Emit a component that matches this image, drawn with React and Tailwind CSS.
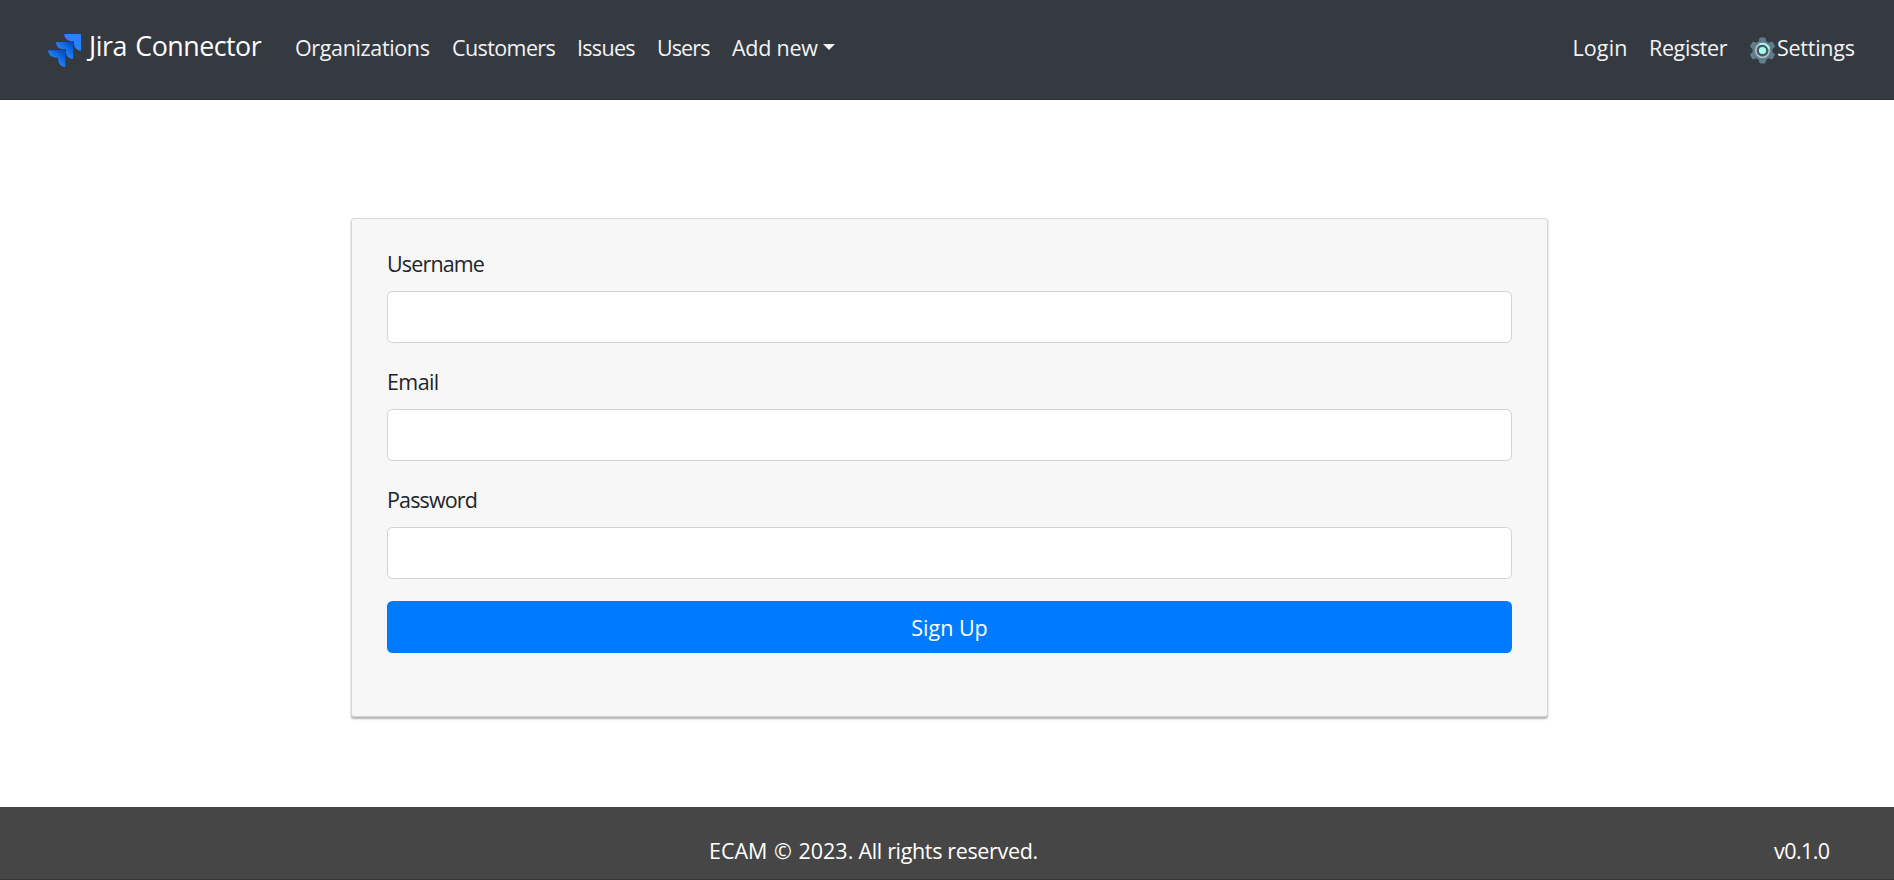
function JiraLogo() {
  return (
    <svg viewBox="0 0 24 24" className="mt-[9px] h-[33px] w-[33px] shrink-0">
      <defs>
        <linearGradient id="jira-mid" x1="0.98" y1="0" x2="0.4" y2="0.6">
          <stop offset="0.18" stopColor="#0052cc" />
          <stop offset="1" stopColor="#2684ff" />
        </linearGradient>
        <linearGradient id="jira-low" x1="1" y1="0.05" x2="0.4" y2="0.65">
          <stop offset="0.18" stopColor="#0052cc" />
          <stop offset="1" stopColor="#2684ff" />
        </linearGradient>
      </defs>
      <path fill="url(#jira-low)" d="M12.1 11.8H0a5.22 5.22 0 0 0 5.23 5.2h2.13v1.8A5.22 5.22 0 0 0 12.58 24V12.3a.5.5 0 0 0-.48-.5z" />
      <path fill="url(#jira-mid)" d="M17.8 5.9H5.74a5.22 5.22 0 0 0 5.21 5.2h2.13v1.95a5.22 5.22 0 0 0 5.22 5.2V6.4a.5.5 0 0 0-.5-.5z" />
      <path fill="#2684ff" d="M23.5 0H11.8a5.22 5.22 0 0 0 5.21 5.22h1.9v2.05A5.22 5.22 0 0 0 24 12.2V.5a.5.5 0 0 0-.5-.5z" />
    </svg>
  );
}

function GearIcon() {
  return (
    <svg viewBox="0 0 26 27" className="-ml-px mr-px mt-[6px] h-[27px] w-[27px] shrink-0">
      <g fill="#607d8b">
        {[0, 60, 120, 180, 240, 300].map((a) => (
          <path key={a} d="M9 6 L10 1.2 Q10.2 .5 11 .5 H15 Q15.8 .5 16 1.2 L17 6 Z" transform={`rotate(${a} 13 13.5)`} />
        ))}
        <circle cx="13" cy="13.5" r="10" />
      </g>
      <circle cx="13" cy="13.5" r="6.8" fill="#455a64" stroke="#b0bec5" strokeWidth="1.8" />
      <path d="M10 7.4 A6.8 6.8 0 0 1 19.6 12" fill="none" stroke="#a7ffeb" strokeWidth="1.8" />
      <circle cx="13" cy="13.5" r="3.6" fill="#a7ffeb" />
    </svg>
  );
}

function Field({ id, label, type, spacing }) {
  return (
    <div className="mb-[22px]">
      <label htmlFor={id} className={`mb-[11px] block h-[33px] ${spacing}`}>{label}</label>
      <input id={id} type={type} className="block h-[52px] w-full rounded-[5.5px] border border-[#ced4da] bg-white px-4 outline-none" />
    </div>
  );
}

export default function App() {
  return (
    <div className="flex h-[880px] flex-col overflow-hidden bg-white font-['Open_Sans','Noto_Sans',sans-serif] text-[21.5px] leading-[33px] whitespace-nowrap text-[#212529]">
      <nav className="flex h-[100px] shrink-0 items-start border-b border-[#2e3338] bg-[#343a40] pr-[39px] pl-[48px] text-[#f3f3f4]">
        <a className="mt-[25px] flex w-[247px] items-start text-[26.8px] leading-[41px] tracking-[-0.5px] text-white">
          <JiraLogo />
          <span className="ml-[8px] [word-spacing:2px]">Jira Connector</span>
        </a>
        <div className="mt-[31px] flex gap-[22px]">
          <a className="w-[135px] tracking-[-0.36px]">Organizations</a>
          <a className="w-[103px] tracking-[-0.6px]">Customers</a>
          <a className="w-[58px] tracking-[-0.7px]">Issues</a>
          <a className="w-[53px] tracking-[-0.9px]">Users</a>
          <a className="flex tracking-[-0.23px]">
            <span className="w-[91px]">Add new</span>
            <span className="mt-[13px] h-0 w-0 border-x-[6px] border-t-[6px] border-x-transparent border-t-[#f3f3f4]" />
          </a>
        </div>
        <div className="mt-[31px] ml-auto flex gap-[22px]">
          <a className="w-[54.5px] tracking-[0.1px]">Login</a>
          <a className="w-[79px] tracking-[-0.38px]">Register</a>
          <a className="flex tracking-[-0.25px]">
            <GearIcon />
            <span className="w-[78px]">Settings</span>
          </a>
        </div>
      </nav>

      <main className="flex-1 pt-[118px] pl-[351px]">
        <form className="h-[499px] w-[1197px] rounded-[3px] border border-[#d5d7d9] bg-[#f7f7f7] px-[35px] pt-[28px] shadow-[0_2px_2px_rgba(0,0,0,0.3)]">
          <Field id="username" label="Username" type="text" spacing="tracking-[-0.85px]" />
          <Field id="email" label="Email" type="email" spacing="tracking-[-0.6px]" />
          <Field id="password" label="Password" type="password" spacing="tracking-[-0.85px]" />
          <button type="button" className="flex h-[52px] w-full items-center justify-center rounded-[5.5px] bg-[#007bff] text-white">
            Sign Up
          </button>
        </form>
      </main>

      <footer className="flex h-[73px] shrink-0 justify-between border-b border-[#343a40] bg-[#464646] pt-[27px] pr-[63px] pl-[709px] text-white">
        <span className="tracking-[-0.35px]">
          <span className="tracking-normal [word-spacing:1px]">ECAM © 2023.</span> All rights reserved.
        </span>
        <span className="w-[57px] tracking-[-0.56px]">v0.1.0</span>
      </footer>
    </div>
  );
}
